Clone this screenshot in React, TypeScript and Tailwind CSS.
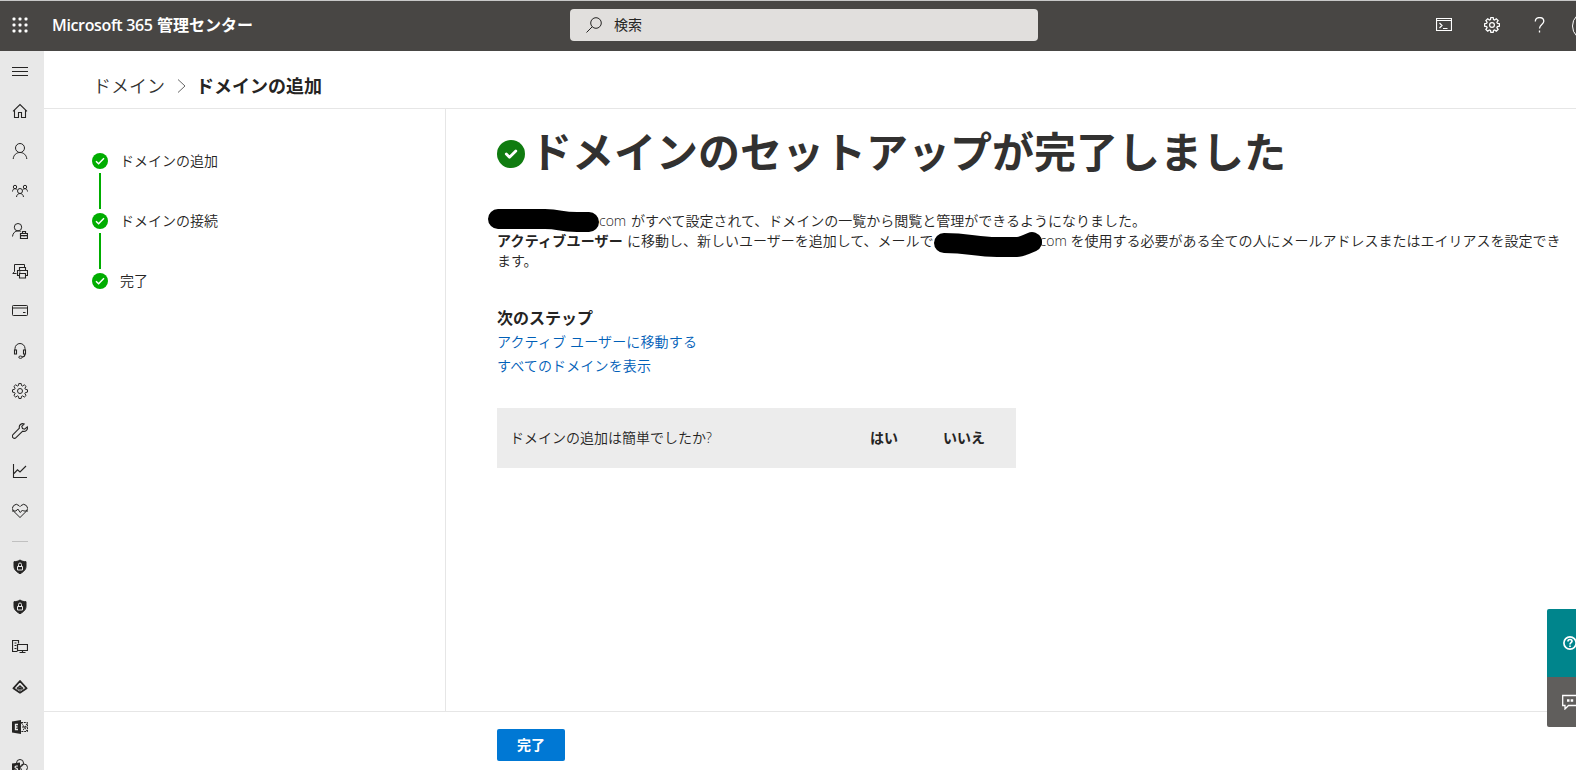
import type { ReactNode } from "react";

function Icon({ children, className = "" }: { children: ReactNode; className?: string }) {
  return (
    <svg width="16" height="16" viewBox="0 0 16 16" fill="none" stroke="currentColor" strokeWidth="1" className={`shrink-0 ${className}`}>
      {children}
    </svg>
  );
}

const gearPath =
  "M6.900 .4h2.200l.4 2.100 1.100.5 1.700-1.200 1.800 1.700-1.200 1.700.5 1.100 2.100.5v2.300l-2.100.5-.5 1.100 1.200 1.700-1.800 1.700-1.700-1.200-1.100.5-.4 2.100H6.900l-.4-2.100-1.100-.5-1.700 1.200-1.800-1.700 1.200-1.700-.5-1.100-2.100-.5V6.800l2.100-.5.5-1.100-1.200-1.700 1.800-1.700 1.700 1.200 1.100-.5z";

const Gear = () => (
  <Icon>
    <path d={gearPath} strokeWidth="1.300" />
    <circle cx="8" cy="8" r="2.400" strokeWidth="1.200" />
  </Icon>
);

const Shield = () => (
  <Icon>
    <path d="M8 1c1.800 1.200 3.800 1.700 6 1.700V7.500c0 3-2.400 5.500-6 7.200-3.600-1.700-6-4.200-6-7.200V2.700C4.200 2.700 6.200 2.200 8 1z" fill="currentColor" />
    <path d="M5.500 7.500h5v3.500h-5zM6.500 7.500V5.500a1.500 1.500 0 0 1 3 0v2" stroke="#e8e8e8" />
  </Icon>
);

const navIcons: ReactNode[] = [
  <Icon><path d="M0 4.500h16M0 8.500h16M0 12.500h16" strokeWidth="1.100" /></Icon>,
  <Icon><path d="M1 8.300 8 1.500l7 6.800M2.500 7v7.500h4v-5h3v5h4V7" strokeWidth="1.100" /></Icon>,
  <Icon><circle cx="8" cy="5" r="4.500" /><path d="M1.200 16c.3-4 3.200-6.500 6.800-6.500s6.500 2.500 6.800 6.500" /></Icon>,
  <Icon>
    <circle cx="8" cy="8" r="2.500" /><path d="M4.500 14c.2-2.200 1.700-3.500 3.500-3.500s3.300 1.300 3.500 3.500" />
    <circle cx="3" cy="4" r="1.700" /><circle cx="13" cy="4" r="1.700" />
    <path d="M.5 8.500C.6 6.800 1.600 5.700 3 5.700c1 0 1.700.4 2.200 1M15.500 8.500c-.1-1.700-1.100-2.800-2.500-2.800-1 0-1.700.4-2.200 1" />
  </Icon>,
  <Icon>
    <circle cx="6" cy="4.200" r="3.700" /><path d="M.5 13.500C.8 10.200 3 7.900 6 7.900c1 0 1.900.3 2.700.8" />
    <path d="M8.500 10.500h7v5h-7zM10.500 10.500v-2h3v2M8.500 12.700h7M12 12v1.500" strokeWidth="1.200" />
  </Icon>,
  <Icon>
    <path d="M4.500 10.500H.8l1.700-2v-7h10v3" />
    <path d="M7.500 7V4.500h6V7M7.500 12.500h-2V7.500h10v5h-2M7.500 10.500h6v4.500h-6zM7 9h1.500" strokeWidth="1.100" />
  </Icon>,
  <Icon><rect x=".5" y="2.500" width="15" height="10" rx=".8" /><path d="M.5 5h15M11 9.500h2.500" /></Icon>,
  <Icon>
    <path d="M3 7V5.500a5 5 0 0 1 10 0V7" />
    <path d="M2.500 7h2v4h-2zM11.500 7h2v4h-2zM13 11c0 2-1 3-3 3" strokeWidth="1.100" />
    <ellipse cx="8.500" cy="14.200" rx="1.700" ry="1.200" />
  </Icon>,
  <Icon><path d={gearPath} /><circle cx="8" cy="8" r="2.500" /></Icon>,
  <Icon><path d="M15.300 3.800 12.600 6.200 10.500 5.500 9.800 3.400 12.200.9C9.500-.1 6.600 2 7.400 5.200L1 11.600a2.200 2.200 0 0 0 0 3 2.200 2.200 0 0 0 3 0l6.700-6.400C13.700 9 16.100 6.500 15.300 3.800z" strokeWidth="1.100" /></Icon>,
  <Icon><path d="M1.500 1v13.500H15M2 10.500l3.500-3.700L8 9l6-6" strokeWidth="1.100" /></Icon>,
  <Icon>
    <path d="M8 14.500 1.600 8.200a4 4 0 0 1 0-5.600 3.800 3.800 0 0 1 5.400 0l1 1 1-1a3.800 3.800 0 0 1 5.400 0 4 4 0 0 1 0 5.600z" />
    <path d="M0 8h4l1.800-2 2.500 3.500L10.500 7l1 1H16" />
  </Icon>,
];

const centerIcons: ReactNode[] = [
  <Shield />,
  <Shield />,
  <Icon>
    <path d="M5.500 12.500h-5v-11h6v3M2.500 4h2M2.500 9.500h2M2.500 6.500h2" strokeWidth="1.200" />
    <path d="M5.500 5.500h10v6h-10zM10.500 11.500v2M7.500 13.500h6" strokeWidth="1.200" />
  </Icon>,
  <Icon>
    <path d="M8 2 14.600 9.300 8 13.700 1.400 9.300z" strokeWidth="1.800" strokeLinejoin="round" />
    <path d="M8 6v6M4.800 9.500 8 7l3.200 2.500M5.500 10.500 8 9l2.500 1.500" strokeWidth="1.100" />
  </Icon>,
  <Icon>
    <path d="M0 2.500 9 1v14l-9-1.500z" fill="currentColor" stroke="none" />
    <path d="M6 5.500H3.500v5H6M3.500 8h2" stroke="#e8e8e8" strokeWidth="1.300" />
    <path d="M9 3.500h6.500v9H9M9.500 4l5.500 8M15 4.500l-4 7M10 8h5" strokeDasharray="2 .8" />
  </Icon>,
  <Icon>
    <circle cx="8" cy="4" r="3.500" /><circle cx="12" cy="8.500" r="3.500" />
    <path d="M0 4.500 8 3.500v12l-8-1.200z" fill="currentColor" stroke="none" />
    <path d="M5.800 7.200c-3-.8-3.500 1.500-1.700 2 2.500.6 1.700 3-1.800 1.900" stroke="#e8e8e8" strokeWidth="1.200" />
  </Icon>,
];

function StepCheck() {
  return (
    <svg width="16" height="16" viewBox="0 0 16 16" className="shrink-0">
      <circle cx="8" cy="8" r="8" fill="#00ad00" />
      <path d="M4 8.300l2.600 2.500L12 5.300" fill="none" stroke="#fff" strokeWidth="1.500" />
    </svg>
  );
}

function DoneBadge() {
  return (
    <svg width="28" height="28" viewBox="0 0 28 28" className="mt-[3px] shrink-0">
      <circle cx="14" cy="14" r="14" fill="#107c10" />
      <path d="M9.300 14l3.200 3.200 6.300-6.300" fill="none" stroke="#fff" strokeWidth="2.800" strokeLinecap="round" strokeLinejoin="round" />
    </svg>
  );
}

const steps = ["ドメインの追加", "ドメインの接続", "完了"];

export default function App() {
  return (
    <div className="flex h-[770px] w-[1576px] flex-col overflow-hidden bg-white font-['Open_Sans','Noto_Sans_CJK_JP',sans-serif] text-sm font-[350] text-[#252423]">
      <header className="flex h-[51px] shrink-0 items-center border-t border-[#c8c8c8] bg-[#484644] pb-0.5 text-white">
        <svg width="16" height="16" viewBox="0 0 16 16" fill="#fff" className="ml-3 shrink-0">
          {[0, 6, 12].map((y) => [0, 6, 12].map((x) => <rect key={`${x}-${y}`} x={x + 0.5} y={y + 0.5} width="3" height="3" rx="1" />))}
        </svg>
        <h1 className="ml-6 w-[518px] shrink-0 text-base leading-6 font-semibold whitespace-nowrap">
          <span className="inline-block w-[105px] tracking-[-0.35px]">Microsoft 365</span>管理センター
        </h1>
        <div className="flex h-8 w-[468px] shrink-0 items-center rounded-sm bg-[#e1dfdd] pl-4 font-normal text-[#252423]">
          <Icon className="mr-3"><circle cx="10" cy="6" r="5.300" /><path d="M6.300 9.700.5 15.500" /></Icon>
          検索
        </div>
        <div className="ml-[398px] flex shrink-0 items-center gap-8">
          <Icon><path d="M.5 1.500h15v12H.5zM.5 3.500h15M3.500 6l2.500 2.500L3.500 11M7 11.500h4.500" strokeWidth="1.200" /></Icon>
          <Gear />
          <Icon><path d="M3.300 4.500C3.300 2 5 .5 7.500 .5s4.300 1.500 4.300 3.800C11.800 7.500 7.500 7.700 7.500 11.500M7.500 13.500v2" strokeWidth="1.300" /></Icon>
          <svg width="32" height="32" viewBox="0 0 32 32" fill="none" stroke="#fff" className="-ml-2.5 shrink-0"><circle cx="16.500" cy="17" r="14" /></svg>
        </div>
      </header>

      <div className="flex min-h-0 grow">
        <nav className="flex w-11 shrink-0 flex-col items-center overflow-hidden bg-[#e8e8e8] pr-1">
          {navIcons.map((icon, i) => (
            <div key={i} className="flex h-10 w-10 shrink-0 items-center justify-center">{icon}</div>
          ))}
          <div className="mt-[10px] mb-[5px] h-px w-4 shrink-0 bg-[#c0c0c0]" />
          {centerIcons.map((icon, i) => (
            <div key={i} className="flex h-10 w-10 shrink-0 items-center justify-center">{icon}</div>
          ))}
        </nav>

        <div className="flex min-w-0 grow flex-col">
          <div className="flex h-[58px] shrink-0 items-center border-b border-[#e6e6e6] pt-3 pl-[49px] text-lg leading-6">
            <span className="text-[#323130]">ドメイン</span>
            <svg width="9" height="14" viewBox="0 0 9 14" fill="none" stroke="#666" className="mr-2.5 ml-3"><path d="M1 .5 8 7l-7 6.500" /></svg>
            <span className="font-bold">ドメインの追加</span>
          </div>

          <div className="flex min-h-0 grow">
            <aside className="w-[402px] shrink-0 border-r border-[#e6e6e6] pt-11 pl-12">
              {steps.map((step, i) => (
                <div key={step} className="flex h-[60px] gap-3">
                  <div className="flex flex-col items-center">
                    <StepCheck />
                    {i < steps.length - 1 && <div className="mt-1 h-9 w-0.5 bg-[#00ad00]" />}
                  </div>
                  <span className="h-4 leading-[15px]">{step}</span>
                </div>
              ))}
            </aside>

            <main className="min-w-0 grow pl-[51px]">
              <div className="flex h-[86px] items-center gap-[5px] pr-4">
                <DoneBadge />
                <h2 className="text-[42px] leading-[56px] font-bold whitespace-nowrap text-[#323130]">ドメインのセットアップが完了しました</h2>
              </div>
              <div className="relative mt-4 leading-5 whitespace-nowrap">
                <p><span className="inline-block w-[102px]" /><span className="inline-block w-[32px]">com</span>がすべて設定されて、ドメインの一覧から閲覧と管理ができるようになりました。</p>
                <p>
                  <b className="inline-block w-[130px] font-bold tracking-[0.2px]">アクティブユーザー</b>に移動し、新しいユーザーを追加して、メールで
                  <span className="inline-block w-[106px]" /><span className="inline-block w-[31px]">com</span>を使用する必要がある全ての人にメールアドレスまたはエイリアスを設定でき
                </p>
                <p>ます。</p>
                <svg width="570" height="60" viewBox="0 0 570 60" fill="none" stroke="#000" strokeLinecap="round" strokeLinejoin="round" strokeWidth="20" className="absolute -top-1 -left-3">
                  <path d="M13 12H60C76 12 74 15 92 15H104" />
                  <path d="M459 36C485 36 490 40 512 40H532Q536 40 547 35" />
                </svg>
              </div>
              <h3 className="mt-[35px] text-base leading-6 font-bold">次のステップ</h3>
              <div className="flex flex-col leading-6 tracking-[0.15px] text-[#0060b8]">
                <a>アクティブ ユーザーに移動する</a>
                <a>すべてのドメインを表示</a>
              </div>
              <div className="mt-[30px] flex h-[60px] w-[519px] items-center bg-[#ececec] pl-[13px]">
                <span className="w-[360px]">ドメインの追加は簡単でしたか?</span>
                <b className="w-[73px] font-bold">はい</b>
                <b className="font-bold">いいえ</b>
              </div>
            </main>
          </div>

          <footer className="flex h-[59px] shrink-0 items-start border-t border-[#e6e6e6] pt-[17px] pl-[453px]">
            <button className="h-8 w-[68px] rounded-xs bg-[#0078d4] font-bold text-white">完了</button>
          </footer>
        </div>
      </div>

      <div className="absolute top-[609px] left-[1547px] flex w-[29px] flex-col overflow-hidden rounded-l-xs text-white">
        <div className="flex h-[68px] items-center bg-[#00858c] pl-4">
          <svg width="14" height="14" viewBox="0 0 14 14" fill="none" stroke="#fff" strokeWidth="1.700" className="shrink-0">
            <circle cx="7" cy="7" r="6.100" /><path d="M5 5.500C5 4.200 5.900 3.500 7 3.500s2 .8 2 1.800C9 6.700 7 6.700 7 8.500M7 9.500V11" />
          </svg>
        </div>
        <div className="flex h-[50px] items-center bg-[#605e5c] pl-[15px]">
          <svg width="16" height="16" viewBox="0 0 16 16" fill="none" stroke="#fff" className="shrink-0">
            <path d="M.7 1.500h14.600v10H6.500L3 15v-3.500H.7z" strokeWidth="1.300" /><path d="M5 6.500h2.500M8.700 6.500h2.500" strokeWidth="2.500" />
          </svg>
        </div>
      </div>
    </div>
  );
}
